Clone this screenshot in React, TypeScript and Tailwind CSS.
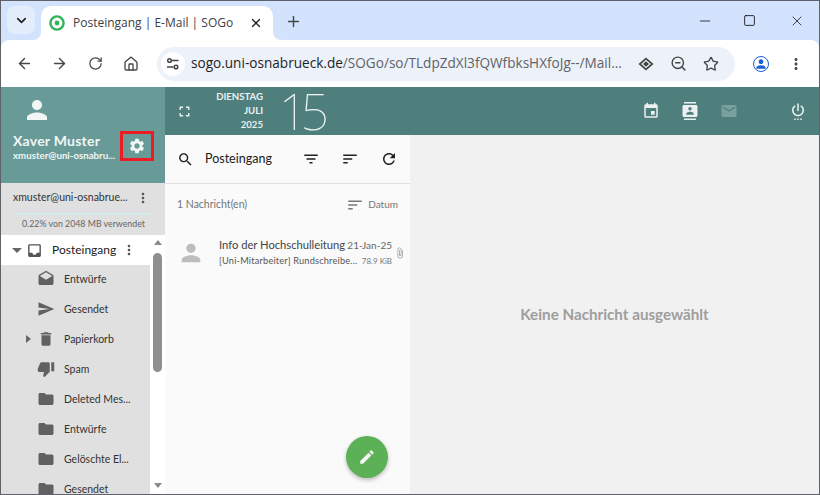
import { ArrowLeft, ArrowRight, ChevronDown, House, Minus, Plus, RotateCw, Square, Star, X, ZoomOut } from "lucide-react";

const ICONS: Record<string, string> = {
  person: "M12 12c2.21 0 4-1.79 4-4s-1.79-4-4-4-4 1.79-4 4 1.79 4 4 4zm0 2c-2.67 0-8 1.34-8 4v2h16v-2c0-2.66-5.33-4-8-4z",
  settings: "M19.14,12.94c0.04-0.3,0.06-0.61,0.06-0.94c0-0.32-0.02-0.64-0.07-0.94l2.03-1.58c0.18-0.14,0.23-0.41,0.12-0.61 l-1.92-3.32c-0.12-0.22-0.37-0.29-0.59-0.22l-2.39,0.96c-0.5-0.38-1.03-0.7-1.62-0.94L14.4,2.81c-0.04-0.24-0.24-0.41-0.48-0.41 h-3.84c-0.24,0-0.43,0.17-0.47,0.41L9.25,5.35C8.66,5.59,8.12,5.92,7.63,6.29L5.24,5.33c-0.22-0.08-0.47,0-0.59,0.22L2.74,8.87 C2.62,9.08,2.66,9.34,2.86,9.48l2.03,1.58C4.84,11.36,4.8,11.69,4.8,12s0.02,0.64,0.07,0.94l-2.03,1.58 c-0.18,0.14-0.23,0.41-0.12,0.61l1.92,3.32c0.12,0.22,0.37,0.29,0.59,0.22l2.39-0.96c0.5,0.38,1.03,0.7,1.62,0.94l0.36,2.54 c0.05,0.24,0.24,0.41,0.48,0.41h3.84c0.24,0,0.44-0.17,0.47-0.41l0.36-2.54c0.59-0.24,1.13-0.56,1.62-0.94l2.39,0.96 c0.22,0.08,0.47,0,0.59-0.22l1.92-3.32c0.12-0.22,0.07-0.47-0.12-0.61L19.14,12.94z M12,15.6c-1.98,0-3.6-1.62-3.6-3.6 s1.62-3.6,3.6-3.6s3.6,1.62,3.6,3.6S13.98,15.6,12,15.6z",
  more: "M12 8c1.1 0 2-.9 2-2s-.9-2-2-2-2 .9-2 2 .9 2 2 2zm0 2c-1.1 0-2 .9-2 2s.9 2 2 2 2-.9 2-2-.9-2-2-2zm0 6c-1.1 0-2 .9-2 2s.9 2 2 2 2-.9 2-2-.9-2-2-2z",
  inbox: "M19 3H5c-1.1 0-2 .9-2 2v14c0 1.1.9 2 2 2h14c1.1 0 2-.9 2-2V5c0-1.1-.9-2-2-2zm0 12h-4c0 1.66-1.35 3-3 3s-3-1.34-3-3H5V5h14v10z",
  drafts: "M21.99 8c0-.72-.37-1.35-.94-1.7L12 1 2.95 6.3C2.38 6.65 2 7.28 2 8v10c0 1.1.9 2 2 2h16c1.1 0 2-.9 2-2l-.01-10zM12 13L3.74 7.84 12 3l8.26 4.84L12 13z",
  send: "M2.01 21L23 12 2.01 3 2 10l15 2-15 2z",
  trash: "M6 19c0 1.1.9 2 2 2h8c1.1 0 2-.9 2-2V7H6v12zM19 4h-3.5l-1-1h-5l-1 1H5v2h14V4z",
  spam: "M15 3H6c-.83 0-1.54.5-1.84 1.22l-3.02 7.05c-.09.23-.14.47-.14.73v2c0 1.1.9 2 2 2h6.31l-.95 4.57-.03.32c0 .41.17.79.44 1.06L9.83 23l6.59-6.59c.36-.36.58-.86.58-1.41V5c0-1.1-.9-2-2-2zm4 0v12h4V3h-4z",
  folder: "M10 4H4c-1.1 0-1.99.9-1.99 2L2 18c0 1.1.9 2 2 2h16c1.1 0 2-.9 2-2V8c0-1.1-.9-2-2-2h-8l-2-2z",
  search: "M15.5 14h-.79l-.28-.27C15.41 12.59 16 11.11 16 9.5 16 5.91 13.09 3 9.5 3S3 5.91 3 9.5 5.91 16 9.5 16c1.61 0 3.09-.59 4.23-1.57l.27.28v.79l5 4.99L20.49 19l-4.99-5zm-6 0C7.01 14 5 11.99 5 9.5S7.01 5 9.5 5 14 7.01 14 9.5 11.99 14 9.5 14z",
  filter: "M10 18h4v-2h-4v2zM3 6v2h18V6H3zm3 7h12v-2H6v2z",
  sort: "M3 18h6v-2H3v2zM3 6v2h18V6H3zm0 7h12v-2H3v2z",
  refresh: "M17.65 6.35C16.2 4.9 14.21 4 12 4c-4.42 0-7.99 3.58-7.99 8s3.57 8 7.99 8c3.73 0 6.84-2.55 7.73-6h-2.08c-.82 2.33-3.04 4-5.65 4-3.31 0-6-2.69-6-6s2.69-6 6-6c1.66 0 3.14.69 4.22 1.78L13 11h7V4l-2.35 2.35z",
  edit: "M3 17.25V21h3.75L17.81 9.94l-3.75-3.75L3 17.25zM20.71 7.04c.39-.39.39-1.02 0-1.41l-2.34-2.34c-.39-.39-1.02-.39-1.41 0l-1.83 1.83 3.75 3.75 1.83-1.83z",
  event: "M17 12h-5v5h5v-5zM16 1v2H8V1H6v2H5c-1.11 0-1.99.9-1.99 2L3 19c0 1.1.89 2 2 2h14c1.1 0 2-.9 2-2V5c0-1.1-.9-2-2-2h-1V1h-2zm3 18H5V8h14v11z",
  contacts: "M20 0H4v2h16V0zM4 24h16v-2H4v2zM20 4H4c-1.1 0-2 .9-2 2v12c0 1.1.9 2 2 2h16c1.1 0 2-.9 2-2V6c0-1.1-.9-2-2-2zm-8 2.75c1.24 0 2.25 1.01 2.25 2.25s-1.01 2.25-2.25 2.25S9.75 10.24 9.75 9 10.76 6.75 12 6.75zM17 17H7v-1.5c0-1.67 3.33-2.5 5-2.5s5 .83 5 2.5V17z",
  email: "M20 4H4c-1.1 0-1.99.9-1.99 2L2 18c0 1.1.9 2 2 2h16c1.1 0 2-.9 2-2V6c0-1.1-.9-2-2-2zm0 4l-8 5-8-5V6l8 5 8-5v2z",
  power: "M7 24h2v-2H7v2zm4 0h2v-2h-2v2zm2-22h-2v10h2V2zm3.56 2.44l-1.45 1.45C16.84 6.94 18 8.83 18 11c0 3.31-2.69 6-6 6s-6-2.69-6-6c0-2.17 1.16-4.06 2.88-5.12L7.44 4.44C5.36 5.88 4 8.28 4 11c0 4.42 3.58 8 8 8s8-3.58 8-8c0-2.72-1.36-5.12-3.44-6.56zM15 24h2v-2h-2v2z",
  fullscreen: "M7 14H5v5h5v-2H7v-3zm-2-4h2V7h3V5H5v5zm12 7h-3v2h5v-5h-2v3zM14 5v2h3v3h2V5h-5z",
  attach: "M16.5 6v11.5c0 2.21-1.79 4-4 4s-4-1.79-4-4V5c0-1.38 1.12-2.5 2.5-2.5s2.5 1.12 2.5 2.5v10.5c0 .55-.45 1-1 1s-1-.45-1-1V6H10v9.5c0 1.38 1.12 2.5 2.5 2.5s2.5-1.12 2.5-2.5V5c0-2.21-1.79-4-4-4S7 2.79 7 5v12.5c0 3.04 2.46 5.5 5.5 5.5s5.5-2.46 5.5-5.5V6h-1.5z",
};

function Icon({ name, className }: { name: string; className?: string }) {
  return (
    <svg viewBox="0 0 24 24" fill="currentColor" className={`shrink-0 ${className ?? ""}`}>
      <path d={ICONS[name]} />
    </svg>
  );
}

const folders = [
  { icon: "drafts", label: "Entwürfe" },
  { icon: "send", label: "Gesendet" },
  { icon: "trash", label: "Papierkorb", caret: true },
  { icon: "spam", label: "Spam" },
  { icon: "folder", label: "Deleted Mes..." },
  { icon: "folder", label: "Entwürfe" },
  { icon: "folder", label: "Gelöschte El..." },
  { icon: "folder", label: "Gesendet" },
];

function BrowserChrome() {
  return (
    <div className="shrink-0 bg-[#d3e3fd] font-['Open_Sans',sans-serif]">
      {/* tab strip */}
      <div className="h-[39px] flex items-end pl-[6px]">
        <div className="self-start mt-[5px] w-[28px] h-[28px] rounded-lg bg-[#e4edfb] flex items-center justify-center">
          <ChevronDown size={15} strokeWidth={2.6} className="text-[#1f1f1f]" />
        </div>
        <div className="relative ml-[6px] w-[232px] h-[34px] bg-white rounded-t-[10px] flex items-center pl-[8px] pr-[10px]">
          <span className="absolute -left-[8px] bottom-0 w-[8px] h-[8px] bg-white">
            <span className="block w-[8px] h-[8px] rounded-br-[8px] bg-[#d3e3fd]" />
          </span>
          <span className="absolute -right-[8px] bottom-0 w-[8px] h-[8px] bg-white">
            <span className="block w-[8px] h-[8px] rounded-bl-[8px] bg-[#d3e3fd]" />
          </span>
          <svg viewBox="0 0 16 16" className="w-[16px] h-[16px] shrink-0">
            <circle cx="8" cy="8" r="6.6" fill="none" stroke="#2fb457" strokeWidth="2.4" />
            <circle cx="8" cy="8" r="2.4" fill="#2fb457" />
          </svg>
          <span className="ml-[8px] text-[12px] text-[#3c4043] flex-1 whitespace-nowrap">Posteingang | E-Mail | SOGo</span>
          <X size={14} strokeWidth={2.2} className="text-[#1f1f1f]" />
        </div>
        <Plus size={17} strokeWidth={2} className="self-center ml-[12px] mt-[1px] text-[#444746]" />
        <div className="ml-auto self-start flex items-center h-[39px] text-[#111]">
          <Minus size={16} strokeWidth={1.2} className="mr-[30px]" />
          <Square size={13} strokeWidth={1.6} className="mr-[33px]" />
          <X size={16} strokeWidth={1.2} className="mr-[14px]" />
        </div>
      </div>
      {/* toolbar */}
      <div className="h-[47px] bg-white rounded-t-[8px] flex items-center pl-[15px] pr-[14px] text-[#444746]">
        <ArrowLeft size={17} strokeWidth={2} />
        <ArrowRight size={17} strokeWidth={2} className="ml-[18px]" />
        <RotateCw size={15} strokeWidth={2} className="ml-[20px]" />
        <House size={16} strokeWidth={2} className="ml-[20px]" />
        <div className="ml-[18px] flex-1 h-[34px] rounded-full bg-[#edf2fa] flex items-center pl-[4px] pr-[16px]">
          <div className="w-[24px] h-[24px] rounded-full bg-white flex items-center justify-center">
            <svg viewBox="0 0 14 14" className="w-[14px] h-[14px]" fill="none" stroke="#444746" strokeWidth="1.5">
              <circle cx="3.500" cy="3.500" r="1.800" />
              <path d="M6 3.500h6.500M1 10h6.500" />
              <circle cx="10" cy="10" r="1.800" />
            </svg>
          </div>
          <div className="ml-[6px] text-[13.6px] whitespace-nowrap text-[#1f1f1f]">
            sogo.uni-osnabrueck.de<span className="text-[#5f6368]">/SOGo/so/TLdpZdXl3fQWfbksHXfoJg--/Mail...</span>
          </div>
          <svg viewBox="0 0 16 14" className="ml-auto w-[16px] h-[14px] shrink-0" fill="#444746">
            <path d="M8 .5 15.500 7 8 13.500.5 7zM8 2.800 3.200 7 8 11.200 12.800 7z" fillRule="evenodd" />
            <path d="M8 4.200 11 7 8 9.800 5 7z" />
          </svg>
          <ZoomOut size={17} strokeWidth={2} className="ml-[16px]" />
          <Star size={16} strokeWidth={2} className="ml-[16px]" />
        </div>
        <div className="ml-[18px] w-[16px] h-[16px] rounded-full border-[1.5px] border-[#1a5fd0] flex flex-col items-center justify-end overflow-hidden text-[#1a5fd0]">
          <Icon name="person" className="w-[14px] h-[14px]" />
        </div>
        <Icon name="more" className="ml-[18px] w-[18px] h-[18px]" />
      </div>
    </div>
  );
}

function Sidebar() {
  return (
    <aside className="w-[164px] shrink-0 flex flex-col bg-white overflow-hidden">
      {/* user */}
      <div className="h-[96px] bg-[#689a97] text-[#f1f6f5] pl-[12px] pr-[11px] shrink-0 flex flex-col">
        <Icon name="person" className="w-[30px] h-[30px] mt-[8px] ml-[9px]" />
        <div className="flex items-center mt-[5px]">
          <div className="flex-1 min-w-0 mt-[3px]">
            <div className="text-[14px] font-bold leading-[16px] tracking-[0.25px] whitespace-nowrap">Xaver Muster</div>
            <div className="text-[9.7px] font-bold leading-[13px] whitespace-nowrap">xmuster@uni-osnabru...</div>
          </div>
          <div className="w-[34px] h-[30px] border-[3px] border-[#ec1c24] flex items-center justify-center">
            <Icon name="settings" className="w-[18px] h-[18px]" />
          </div>
        </div>
      </div>
      {/* account */}
      <div className="h-[52px] bg-[#e0e0e0] shrink-0 pl-[12px] pr-[11px] pt-[5px]">
        <div className="flex items-center h-[20px]">
          <span className="flex-1 text-[10.5px] text-[#333] whitespace-nowrap">xmuster@uni-osnabrue...</span>
          <Icon name="more" className="w-[16px] h-[16px] text-[#555] mr-[3px]" />
        </div>
        <div className="h-[2px] bg-[#d2ecea] mt-[5px]" />
        <div className="text-[8.8px] leading-[13px] text-[#666] mt-[2px] whitespace-nowrap text-center">0.22% von 2048 MB verwendet</div>
      </div>
      {/* folder tree */}
      <div className="flex flex-1 min-h-0">
        <div className="w-[149px] flex flex-col min-h-0">
          <div className="h-[30px] bg-white flex items-center shrink-0 pl-[11px]">
            <span className="w-0 h-0 border-l-[5px] border-r-[5px] border-t-[5px] border-l-transparent border-r-transparent border-t-[#666]" />
            <Icon name="inbox" className="w-[17px] h-[17px] ml-[4px] text-[#555]" />
            <span className="ml-[9px] text-[12px] text-[#222]">Posteingang</span>
            <Icon name="more" className="w-[16px] h-[16px] ml-auto mr-[13px] text-[#555]" />
          </div>
          <div className="flex-1 bg-[#e0e0e0] overflow-hidden">
            {folders.map((f, i) => (
              <div key={i} className="h-[30px] pb-[2px] flex items-center relative text-[#333]">
                {f.caret && (
                  <span className="absolute left-[25px] w-0 h-0 border-t-[4px] border-b-[4px] border-l-[5px] border-t-transparent border-b-transparent border-l-[#666]" />
                )}
                <Icon name={f.icon} className="w-[18px] h-[18px] ml-[36px] text-[#616161]" />
                <span className="ml-[9px] text-[10.5px] leading-[14px] whitespace-nowrap">{f.label}</span>
              </div>
            ))}
          </div>
        </div>
        {/* scrollbar */}
        <div className="w-[15px] bg-white flex flex-col items-center pt-[5px]">
          <span className="w-0 h-0 border-l-[4px] border-r-[4px] border-b-[5px] border-l-transparent border-r-transparent border-b-[#8a8a8a]" />
          <div className="w-[9px] h-[119px] rounded-full bg-[#8f8f8f] mt-[8px]" />
          <span className="mt-auto mb-[6px] w-0 h-0 border-l-[4px] border-r-[4px] border-t-[5px] border-l-transparent border-r-transparent border-t-[#8a8a8a]" />
        </div>
      </div>
    </aside>
  );
}

function MessageList() {
  return (
    <section className="w-[245px] shrink-0 bg-[#fafafa] flex flex-col relative">
      <div className="h-[49px] border-b border-[#e0e0e0] flex items-center pl-[12px] pr-[12px] text-[#212121]">
        <Icon name="search" className="w-[17px] h-[17px]" />
        <span className="ml-[11px] text-[12.5px] flex-1">Posteingang</span>
        <Icon name="filter" className="w-[18px] h-[18px]" />
        <Icon name="sort" className="w-[18px] h-[18px] ml-[21px]" />
        <Icon name="refresh" className="w-[18px] h-[18px] ml-[21px]" />
      </div>
      <div className="h-[40px] pt-[1px] flex items-center pl-[12px] pr-[12px] text-[#757575]">
        <span className="text-[10.5px] flex-1">1 Nachricht(en)</span>
        <Icon name="sort" className="w-[18px] h-[18px]" />
        <span className="ml-[4px] text-[10px]">Datum</span>
      </div>
      <div className="h-[58px] flex items-center pl-[12px] pr-[4px]">
        <Icon name="person" className="w-[28px] h-[28px] text-[#bdbdbd]" />
        <div className="ml-[14px] flex-1 min-w-0">
          <div className="flex items-baseline justify-between text-[11.2px] leading-[15px] text-[#444] whitespace-nowrap">
            <span>Info der Hochschulleitung</span>
            <span className="text-[10px] text-[#666]">21-Jan-25</span>
          </div>
          <div className="flex items-baseline justify-between text-[9.2px] leading-[15px] tracking-[0.2px] text-[#555] whitespace-nowrap">
            <span>[Uni-Mitarbeiter] Rundschreibe...</span>
            <span className="text-[8px] tracking-normal text-[#777]">78.9 KiB</span>
          </div>
        </div>
        <Icon name="attach" className="w-[12px] h-[12px] ml-[2px] text-[#9e9e9e]" />
      </div>
      <button className="absolute left-[181px] top-[301px] w-[42px] h-[42px] rounded-full bg-[#5cb056] shadow-[0_2px_4px_rgba(0,0,0,0.25)] flex items-center justify-center text-[#f5f7f3]">
        <Icon name="edit" className="w-[18px] h-[18px]" />
      </button>
    </section>
  );
}

export default function App() {
  return (
    <div className="w-[820px] h-[495px] overflow-hidden flex flex-col border border-[#5f6368] font-['Lato',sans-serif]">
      <BrowserChrome />
      <div className="flex flex-1 min-h-0">
        <Sidebar />
        <div className="flex-1 min-w-0 flex flex-col">
          {/* green top bar */}
          <header className="h-[48px] bg-[#4f7f7c] flex items-center text-[#eaf1f0] shrink-0">
            <Icon name="fullscreen" className="ml-[11px] w-[17px] h-[17px]" />
            <div className="w-[70px] text-right text-[9.6px] leading-[14px] font-bold uppercase">
              <div>Dienstag</div>
              <div>Juli</div>
              <div>2025</div>
            </div>
            <span className="ml-[16px] text-[50px] leading-[48px] font-thin tracking-[-7px] font-['Noto_Sans',sans-serif]">15</span>
            <Icon name="event" className="ml-auto w-[18px] h-[18px]" />
            <Icon name="contacts" className="ml-[21px] w-[18px] h-[18px]" />
            <Icon name="email" className="ml-[21px] w-[18px] h-[18px] text-[#7aa09e]" />
            <Icon name="power" className="ml-[51px] mr-[12px] w-[18px] h-[18px]" />
          </header>
          <div className="flex flex-1 min-h-0">
            <MessageList />
            <main className="flex-1 bg-[#f1f1f1] flex items-center justify-center">
              <span className="text-[15.2px] font-bold text-[#9e9e9e]">Keine Nachricht ausgewählt</span>
            </main>
          </div>
        </div>
      </div>
    </div>
  );
}
